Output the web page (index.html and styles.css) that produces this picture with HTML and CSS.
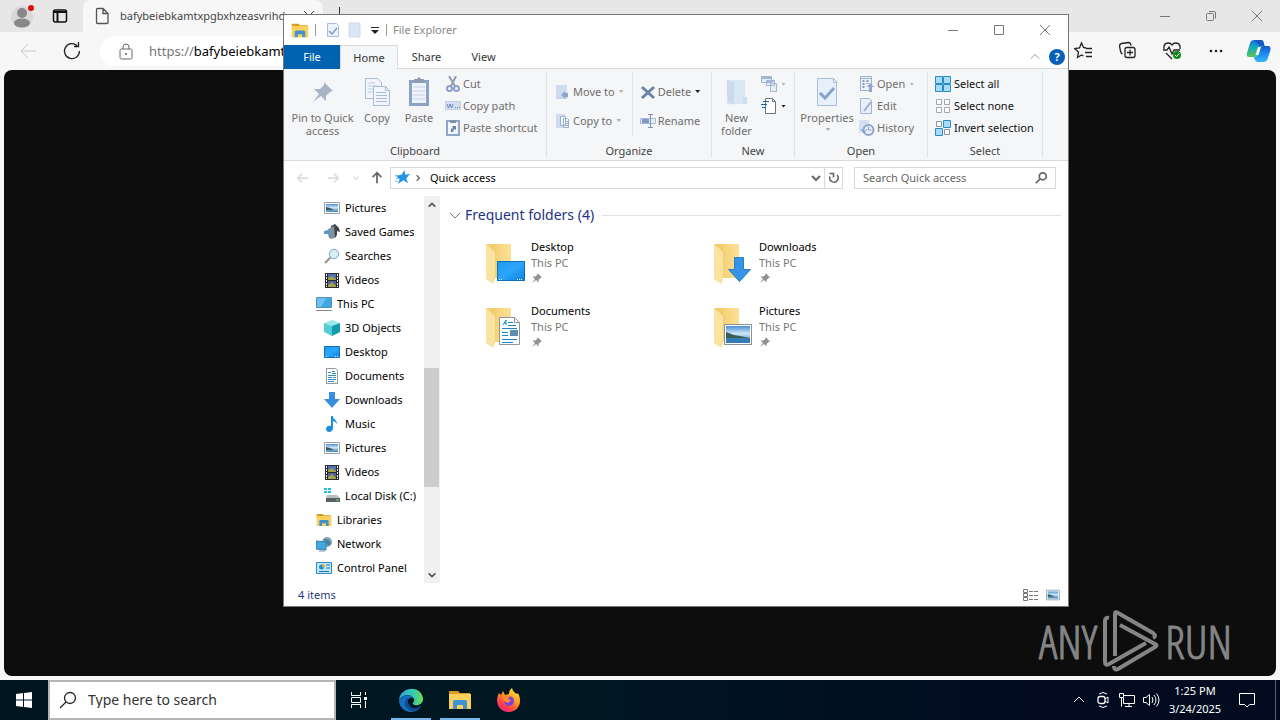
FILE: index.html
```html
<!DOCTYPE html>
<html lang="en">
<head>
<meta charset="utf-8">
<title>File Explorer</title>
<link rel="stylesheet" href="styles.css">
</head>
<body>
<svg class="sprite" aria-hidden="true">
  <defs>
    <linearGradient id="gFold" x1="0" x2="1"><stop offset="0" stop-color="#f3cd6c"/><stop offset="1" stop-color="#fbe196"/></linearGradient>
    <linearGradient id="gDesk" x1="0" y1="0" x2="1" y2="1"><stop offset="0" stop-color="#1e9bf0"/><stop offset=".5" stop-color="#2ba6fb"/><stop offset="1" stop-color="#0a84e0"/></linearGradient>
    <linearGradient id="gSky" x1="0" y1="0" x2="0" y2="1"><stop offset="0" stop-color="#4a90d9"/><stop offset=".45" stop-color="#cfe6f3"/><stop offset="1" stop-color="#3f7fae"/></linearGradient>
    <linearGradient id="gEdge" x1="0" y1="0" x2="1" y2="0"><stop offset="0" stop-color="#2aa9e0"/><stop offset=".6" stop-color="#35c9b0"/><stop offset="1" stop-color="#6fdb4b"/></linearGradient>
    <linearGradient id="gFox" x1=".8" y1="0" x2=".2" y2="1"><stop offset="0" stop-color="#ffe94a"/><stop offset=".4" stop-color="#ff9a1f"/><stop offset=".75" stop-color="#ff3f4a"/><stop offset="1" stop-color="#e0208c"/></linearGradient>
    <linearGradient id="gCopA" x1="0" y1="0" x2="0" y2="1"><stop offset="0" stop-color="#1b6fd0"/><stop offset=".4" stop-color="#13a7c4"/><stop offset="1" stop-color="#5cc653"/></linearGradient>
    <linearGradient id="gCopB" x1="0" y1="0" x2="0" y2="1"><stop offset="0" stop-color="#1a55c8"/><stop offset=".5" stop-color="#1d8df0"/><stop offset="1" stop-color="#35b8f2"/></linearGradient>
  </defs>
  <symbol id="folder-app" viewBox="0 0 24 22"><path d="M1 2h9l2 2h10v4H1z" fill="#dd9a22"/><path d="M1 5h22v15H1z" fill="#fad15c"/><path d="M5 20v-7q0-2 2-2h10q2 0 2 2v7h-4v-4H9v4z" fill="#3f93d2"/></symbol>
  <symbol id="pictures" viewBox="0 0 16 16"><path d="M.5 2.5h15v11H.5z" fill="#fff" stroke="#8ea2b2"/><path d="M2 4h12v8H2z" fill="url(#gSky)"/><path d="M2 7l4 1 4 2H2z" fill="#315a68"/></symbol>
  <symbol id="games" viewBox="0 0 16 16"><path d="M7 2l4-2 4 4 1 4-3-1v4l-2 3H7z" fill="#3f474e"/><path d="M0 7l4-1 1-2 3 3 1 7H5L4 10H0z" fill="#5b98c5"/><path d="M6 4l4-2 1 12-5 1z" fill="#87919a"/></symbol>
  <symbol id="searches" viewBox="0 0 16 16"><path d="M7 9l-6 6" stroke="#9b9189" stroke-width="2"/><circle cx="10" cy="6" r="4.7" fill="#d7effb" stroke="#7da6c2"/></symbol>
  <symbol id="videos" viewBox="0 0 16 16"><path d="M1 1h14v15H1z" fill="#252a30"/><path d="M4 2h8v6H4z" fill="#4f72b8"/><path d="M4 9h8v6H4z" fill="#5361a0"/><path d="M4 6l4-2 4 3v1H4zM4 13l4-3 4 4v1H4z" fill="#a4a243"/><path d="M2.500 2v13M13.500 2v13" stroke="#fff" stroke-dasharray="2 1"/></symbol>
  <symbol id="pc" viewBox="0 0 16 16"><path d="M.5 1.500h15v10H.5z" fill="#3fa9e8" stroke="#5790b5"/><path d="M1 2h9L5 11H1z" fill="#6cc2f2"/><path d="M0 14.500h16" stroke="#7e8890"/></symbol>
  <symbol id="cube" viewBox="0 0 16 16"><path d="M0 3l8-3 8 3-8 3z" fill="#9ae9ec"/><path d="M0 3l8 3v10l-8-4z" fill="#55cbd4"/><path d="M16 3L8 6v10l8-4z" fill="#129aad"/></symbol>
  <symbol id="desk" viewBox="0 0 16 16"><path d="M.5 2.500h15v11H.5z" fill="url(#gDesk)" stroke="#0f6cb7"/><path d="M2 12.500h2M11 12.500h3" stroke="#fff" stroke-dasharray="1"/></symbol>
  <symbol id="doc" viewBox="0 0 16 16"><path d="M2.500.5h9l2 2v13h-11z" fill="#fff" stroke="#8d979d"/><path d="M4 4.500h3M8 3.500h3M8 5.500h4M4 7.500h8M4 9.500h4M9 9.500h3M4 11.500h8M4 13.500h6" stroke="#368dc5"/></symbol>
  <symbol id="down" viewBox="0 0 16 16"><path d="M5 0h6v7h5l-8 9-8-9h5z" fill="#3a8ddb"/></symbol>
  <symbol id="music" viewBox="0 0 16 16"><path d="M7 0h2c0 4 5 4 4 9 0-3-2-3-4-4v7c0 5-7 5-7 1 0-3 3-4 5-3z" fill="#1e8fe0"/></symbol>
  <symbol id="disk" viewBox="0 0 16 16"><path d="M0 0h3v2H0zM4 0h3v2H4zM0 3h3v2H0zM4 3h3v2H4z" fill="#20bde5"/><path d="M3 7h10l3 3H2z" fill="#b8bec2"/><path d="M2 10h14v4H2z" fill="#555f65"/><path d="M12 12h3" stroke="#83e35e"/></symbol>
  <symbol id="network" viewBox="0 0 16 16"><circle cx="11" cy="6" r="5" fill="#7fa4b8"/><path d="M8 3l5 1 2 4-3 2z" fill="#4a7f9d"/><path d="M0 5l10 1v8L0 13z" fill="#45a7e0" stroke="#337fb1"/><path d="M3 15h6" stroke="#8093a0"/></symbol>
  <symbol id="control" viewBox="0 0 16 16"><path d="M.5 2.500h15v11H.5z" fill="#bfe8fb" stroke="#3389bf"/><circle cx="5.500" cy="7" r="2.500" fill="#248fd0"/><path d="M6 7V4a3 3 0 013 3z" fill="#f3a335"/><path d="M10 5h4M10 8h4M3 11.500h10" stroke="#2374a6"/></symbol>
  <symbol id="star" viewBox="0 0 16 16"><path d="M10 0l1 5 5-1-4 5 2 5-5-3-6 4 2-5-4-4 6-1z" fill="#2196e8"/><path d="M0 6h4M1 9h3M0 12h3" stroke="#6bb9ef"/></symbol>
  <symbol id="pin" viewBox="0 0 24 24"><path d="M13 2l9 9-3 1-4 4v5l-5-5-8 6 6-8-5-5h6l4-4z" fill="currentColor"/></symbol>
  <symbol id="copy" viewBox="0 0 32 32"><path d="M4.500 2.500h12l4 4v16h-16z" fill="#f2f6fc" stroke="#a9bbd6"/><path d="M7 7h7M7 10h10M7 13h10M7 16h10" stroke="#bccbe2"/><path d="M12.500 10.500h12l4 4v15h-16z" fill="#f2f6fc" stroke="#a9bbd6"/><path d="M24.500 10.500v4h4M15 16.500h10M15 19.500h11M15 22.500h11M15 25.500h11" stroke="#a9bbd6" fill="none"/></symbol>
  <symbol id="paste" viewBox="0 0 32 32"><path d="M6 4h20v26H6z" fill="#8da3c6"/><path d="M9 7h14v20H9z" fill="#eef3fb"/><path d="M11 3h3l2-2 2 2h3v4H11z" fill="#8f9caf"/><path d="M10 11h12M10 15h12M10 19h12M10 23h12" stroke="#c5d2e8"/></symbol>
  <symbol id="cut" viewBox="0 0 16 16"><path d="M4 0l6 10M11 0L6 10" stroke="#93a0b2" stroke-width="2"/><circle cx="4.500" cy="12.500" r="2.500" fill="none" stroke="#8ba1c5" stroke-width="2"/><circle cx="11.500" cy="12.500" r="2.500" fill="none" stroke="#8ba1c5" stroke-width="2"/></symbol>
  <symbol id="path" viewBox="0 0 16 16"><path d="M.5 3.500h15v8H.5z" fill="#d4def0" stroke="#c3d0e6"/><path d="M2 6l1.500 4L5 6l1.500 4L8 6M10 9.500h1m1 0h1m1 0h1" fill="none" stroke="#6f86b3"/></symbol>
  <symbol id="shortcut" viewBox="0 0 16 16"><path d="M2 1h12v14H2z" fill="#f4f7fc" stroke="#8fa5c9" stroke-width="2"/><path d="M5 0h6v3H5z" fill="#8090a8"/><path d="M6 12V9l2-1-1-2h4v4L9 9l-1 3z" fill="#6484b5"/></symbol>
  <symbol id="moveto" viewBox="0 0 16 16"><path d="M1 1h11v14H1z" fill="#d1dcee"/><path d="M12 9v5H2" fill="none" stroke="#bdcce3"/><path d="M6 11l4-4v2h3v4h-3v2z" fill="#8fa7cd"/></symbol>
  <symbol id="copyto" viewBox="0 0 16 16"><path d="M1 1h9v14H1z" fill="#d1dcee"/><path d="M5.500 3.500h5v9h-5zM8.500 5.500h4l1 1v8h-5z" fill="#f3f6fb" stroke="#9bafd0"/><path d="M10 8.500h3m-3 2h3m-3 2h3" stroke="#9bafd0"/></symbol>
  <symbol id="delete" viewBox="0 0 16 16"><path d="M2 3l12 11M14 3L2 14" stroke="#6c83a8" stroke-width="3"/></symbol>
  <symbol id="rename" viewBox="0 0 16 16"><path d="M.5 5.500h15v5H.5z" fill="#e6ecf6" stroke="#a7b9d7"/><path d="M2 6h7v4H2z" fill="#7f99c4"/><path d="M8 1.500h5M8 14.500h5M10.500 2v12" stroke="#7f93b3"/></symbol>
  <symbol id="newfolder" viewBox="0 0 32 32"><path d="M6 4h18v24H6z" fill="#d9e7f4"/><path d="M6 4l7 3v22l-7-3z" fill="#c9dbec"/><path d="M22 21h4v7h-4z" fill="#cddeee"/></symbol>
  <symbol id="newitem" viewBox="0 0 16 16"><path d="M.5.500h10v6H.5zM5.500 4.500h8v5h-8zM9.500 7.500h6v8h-6z" fill="#e8eef8" stroke="#a3b5d3"/><path d="M1 2h9M6 5h7" stroke="#a3b5d3" stroke-width="2"/></symbol>
  <symbol id="easy" viewBox="0 0 16 16"><path d="M4.500.500h7l3 3v12h-10z" fill="#fff" stroke="#6d7378"/><path d="M11.500.500v3h3" fill="none" stroke="#6d7378"/><path d="M2 3.500h6M0 6.500h6M1 9.500h4" stroke="#1667aa"/></symbol>
  <symbol id="props" viewBox="0 0 32 32"><path d="M6.500 2.500h16l3 3v24h-19z" fill="#e7effb" stroke="#a9bddd"/><path d="M22.500 2.500v4h4" fill="none" stroke="#a9bddd"/><path d="M9 17l5 5 9-10" fill="none" stroke="#8ba2c8" stroke-width="3"/></symbol>
  <symbol id="open" viewBox="0 0 16 16"><path d="M1.500.500h11v14h-11z" fill="#eef3fb" stroke="#9eb0d0"/><path d="M4.500 4v9M8.500 4v4" stroke="#8299c3" stroke-width="2" stroke-dasharray="2 1"/><path d="M2 2.500h10" stroke="#9eb0d0"/><path d="M10 16v-5H8l3-4 4 4h-2v5z" fill="#90a7cd"/></symbol>
  <symbol id="edit" viewBox="0 0 16 16"><path d="M1.500.500h9l2 2v13h-11z" fill="#e8eff9" stroke="#a2b5d4"/><path d="M5 13l7-9" stroke="#9bb0d2" stroke-width="2"/></symbol>
  <symbol id="history" viewBox="0 0 16 16"><path d="M0 0h10v13H0z" fill="#d5e1f0"/><circle cx="9.500" cy="10" r="5" fill="#e9f0fa" stroke="#8ca4cb" stroke-width="2"/><path d="M9.500 7v3h3M2 9l3 4 3-4" fill="none" stroke="#7f98c2"/></symbol>
  <symbol id="selall" viewBox="0 0 16 16"><path d="M.5.5h7v7h-7zM8.500.5h7v7h-7zM.5 8.500h7v7h-7zM8.500 8.500h7v7h-7z" fill="#a5dcfb" stroke="#2b8ac2"/></symbol>
  <symbol id="selnone" viewBox="0 0 16 16"><path d="M1.500 1.500h5v5h-5zM9.500 1.500h5v5h-5zM1.500 9.500h5v5h-5zM9.500 9.500h5v5h-5z" fill="#fff" stroke="#a4a8ab"/></symbol>
  <symbol id="selinv" viewBox="0 0 16 16"><path d="M1.500 1.500h5v5h-5zM9.500 9.500h5v5h-5z" fill="#fff" stroke="#8c969d"/><path d="M8.500.5h7v7h-7zM.5 8.500h7v7h-7z" fill="#a5dcfb" stroke="#2b8ac2"/></symbol>
  <symbol id="min" viewBox="0 0 12 12"><path d="M1 6.500h10" stroke="currentColor"/></symbol>
  <symbol id="max" viewBox="0 0 12 12"><path d="M1.500 1.500h9v9h-9z" fill="none" stroke="currentColor"/></symbol>
  <symbol id="close" viewBox="0 0 12 12"><path d="M1 1l10 10M11 1L1 11" stroke="currentColor"/></symbol>
  <symbol id="chev" viewBox="0 0 12 12"><path d="M2 4l4 4 4-4" fill="none" stroke="currentColor" stroke-width="2"/></symbol>
  <symbol id="chevthin" viewBox="0 0 12 12"><path d="M1 4l5 5 5-5" fill="none" stroke="currentColor"/></symbol>
  <symbol id="lens" viewBox="0 0 16 16"><circle cx="10" cy="6" r="4" fill="none" stroke="currentColor" stroke-width="2"/><path d="M7 9l-5 5" stroke="currentColor" stroke-width="2"/></symbol>
  <symbol id="arrow" viewBox="0 0 16 16"><path d="M14 8H3M7 3L2 8l5 5" fill="none" stroke="currentColor" stroke-width="2"/></symbol>
  <symbol id="fold48" viewBox="0 0 48 48"><path d="M12 4h21v34H17z" fill="url(#gFold)"/><path d="M8 4h2l7 6v30l-2 4-7-5z" fill="#fae2a0"/><path d="M8 4h10l-1 34V12z" fill="#f1cc70"/></symbol>
</svg>

<div class="screen">
  <main class="browser">
    <header class="tabstrip">
      <button class="cell44" aria-label="Profile"><svg width="24" height="28" viewBox="0 0 24 28"><circle cx="12" cy="15" r="11" fill="#dad8d8"/><circle cx="12" cy="11" r="5" fill="#888"/><ellipse cx="12" cy="21" rx="8" ry="4.500" fill="#888"/><circle cx="21" cy="6" r="3" fill="#d8101c"/></svg></button>
      <button class="cell32" aria-label="Tab actions"><svg width="16" height="16" viewBox="0 0 16 16"><rect x="1.500" y="2" width="13" height="12" rx="2" fill="none" stroke="#111" stroke-width="1.500"/><path d="M2 4h12M5.500 4v10" stroke="#111" stroke-width="2"/></svg></button>
      <div class="tab"><svg width="14" height="18" viewBox="0 0 14 18"><path d="M1.500 2.500q0-1 1-1h5.500l5 5v9q0 1-1 1h-9.500q-1 0-1-1zM8 1.500v5h5" fill="none" stroke="#555" stroke-width="1.300"/></svg><span class="tabtitle">bafybeiebkamtxpgbxhzeasvrihd</span><button class="tabclose" aria-label="Close tab"><svg width="12" height="12"><use href="#close"/></svg></button></div>
      <button class="cell32 newtab" aria-label="New tab"><svg width="14" height="14" viewBox="0 0 14 14"><path d="M7.500 0v14M0 7.500h14" stroke="#333"/></svg></button>
      <div class="wincontrols">
        <button aria-label="Minimize browser"><svg width="12" height="12"><use href="#min"/></svg></button>
        <button aria-label="Restore browser"><svg width="12" height="12" viewBox="0 0 12 12"><rect x="1.500" y="3.500" width="7" height="7" rx="1" fill="none" stroke="currentColor"/><path d="M4 1.500h5q1.500 0 1.500 1.500v5.500" fill="none" stroke="currentColor"/></svg></button>
        <button aria-label="Close browser"><svg width="12" height="12"><use href="#close"/></svg></button>
      </div>
    </header>
    <div class="toolbar">
      <button class="cell44 dim" aria-label="Browser back"><svg width="18" height="16" viewBox="0 0 18 16"><path d="M17 8H2M9 1L2 8l7 7" fill="none" stroke="currentColor"/></svg></button>
      <button class="cell44" aria-label="Refresh"><svg width="18" height="18" viewBox="0 0 18 18"><path d="M16.500 9A7.500 7.500 0 1 1 14 3.500M15.500 0v4.500H11" fill="none" stroke="#222" stroke-width="1.300"/></svg></button>
      <div class="urlbar"><svg width="14" height="17" viewBox="0 0 14 17"><rect x="1" y="6" width="12" height="10" rx="1.500" fill="none" stroke="#666"/><path d="M4 6V4a3 3 0 016 0v2" fill="none" stroke="#666"/><circle cx="7" cy="11" r="1" fill="#555"/></svg><span class="url"><span class="scheme">https://</span>bafybeiebkamt</span></div>
      <div class="actions">
        <button class="cell44" aria-label="Favorites"><svg width="20" height="20" viewBox="0 0 20 20"><path d="M12 7L9.500 6.500 7.500 2 5.500 7l-5 .5 4 3.500-1 5.500 4-2.500 2 1M12 7.500h6M11 11.500h7M12 15.500h6" fill="none" stroke="#222" stroke-width="1.300"/></svg></button>
        <button class="cell44" aria-label="Collections"><svg width="20" height="20" viewBox="0 0 20 20"><rect x="7" y="6.500" width="10" height="10" rx="2" fill="none" stroke="#222" stroke-width="1.300"/><path d="M12 8.500v6M9 11.500h6M4.500 13Q3 12.500 2.500 10L1.500 5q0-2 2-2.500l7-1q2 0 2.500 3" fill="none" stroke="#222" stroke-width="1.300"/></svg></button>
        <button class="cell44" aria-label="Browser essentials"><svg width="20" height="20" viewBox="0 0 20 20"><path d="M2 8C1 1 8 1 10 4c2-3 9-3 8 4M1 9h4l2-3 3 7 2-4h6M4 12l6 6" fill="none" stroke="#222" stroke-width="1.300"/><circle cx="15" cy="14" r="4" fill="#128a1b"/><path d="M13 14l1.500 1.500 3-3" fill="none" stroke="#fff"/></svg></button>
        <button class="cell44" aria-label="Settings and more"><svg width="20" height="20" viewBox="0 0 20 20"><g fill="#222"><circle cx="5" cy="10" r="1.300"/><circle cx="10" cy="10" r="1.300"/><circle cx="15" cy="10" r="1.300"/></g></svg></button>
        <button class="copilot" aria-label="Copilot"><svg width="26" height="24" viewBox="0 0 26 24"><path d="M8 1h7q2 0 2.500 2l1 4-4 1-3 8q-1 2-3 2H3q-3 0-2-4L4 4q1-3 4-3z" fill="url(#gCopA)"/><path d="M8 1h7q2 0 2.500 2l1 4h-5z" fill="#1758c2"/><path d="M18 7h4q3 0 2.500 4l-3 9q-1 3-4 3h-6q-2 0-3-3l-.5-2q3 0 4-3l2-6q1-2 4-2z" fill="url(#gCopB)"/><path d="M12 8h3l-2.500 8H9.500z" fill="#f4fbfb"/></svg></button>
      </div>
    </div>
    <div class="webpage">
      <div class="watermark"><span>ANY</span><svg width="56" height="62" viewBox="0 0 56 62"><g fill="none" stroke="currentColor" stroke-width="4" stroke-linejoin="round"><path d="M6 8q-4-1-4 3v41q0 4 4 2L43 33"/><path d="M12 46V4q0-3 3-1l35 20q4 3 0 5"/><path d="M17 15l35 19q3 1 0 3L15 59q-4 2-4-3"/></g></svg><span>RUN</span></div>
    </div>
  </main>

  <section class="explorer" aria-label="File Explorer window">
    <header class="titlebar">
      <svg width="18" height="17" class="appicon"><use href="#folder-app"/></svg><i class="bar"></i>
      <button aria-label="Quick properties"><svg width="14" height="16" viewBox="0 0 14 16"><path d="M1.500 1.500h9l2 2v11h-11z" fill="#eaf2fc" stroke="#a8bddb"/><path d="M3 9l3 3 5-6" fill="none" stroke="#7d9cc9" stroke-width="1.500"/></svg></button>
      <button aria-label="Quick new folder"><svg width="14" height="16" viewBox="0 0 14 16"><path d="M1 1h11v14H1z" fill="#dbe6f4" stroke="#ccdaeb"/></svg></button>
      <button aria-label="Customize toolbar"><svg width="8" height="8" viewBox="0 0 8 8"><path d="M0 1.500h8" stroke="#222"/><path d="M0 4h8L4 8z" fill="#222"/></svg></button>
      <i class="bar"></i><h1>File Explorer</h1>
      <div class="wincontrols">
        <button aria-label="Minimize"><svg width="12" height="12"><use href="#min"/></svg></button>
        <button aria-label="Maximize"><svg width="12" height="12"><use href="#max"/></svg></button>
        <button aria-label="Close"><svg width="12" height="12"><use href="#close"/></svg></button>
      </div>
    </header>
    <nav class="tabs">
      <button class="file">File</button><button class="active">Home</button><button>Share</button><button>View</button>
      <div class="help"><button aria-label="Collapse ribbon"><svg width="10" height="10" class="flip"><use href="#chevthin"/></svg></button><button class="q" aria-label="Help">?</button></div>
    </nav>
    <div class="ribbon">
      <div class="group clipboard"><div class="tools">
        <button class="big pinbtn"><svg width="32" height="32" viewBox="-4 -4 32 32"><use href="#pin" width="24" height="24"/></svg>Pin to Quick<br>access</button>
        <button class="big copybtn"><svg width="32" height="32"><use href="#copy"/></svg>Copy</button>
        <button class="big pastebtn"><svg width="32" height="32"><use href="#paste"/></svg>Paste</button>
        <div class="stack"><button><svg width="16" height="16"><use href="#cut"/></svg>Cut</button><button><svg width="16" height="16"><use href="#path"/></svg>Copy path</button><button><svg width="16" height="16"><use href="#shortcut"/></svg>Paste shortcut</button></div>
      </div><h2>Clipboard</h2></div>
      <div class="group organize"><div class="tools">
        <div class="stack loose"><button><svg width="16" height="16"><use href="#moveto"/></svg>Move to<i class="tri"></i></button><button><svg width="16" height="16"><use href="#copyto"/></svg>Copy to<i class="tri"></i></button></div>
        <div class="stack loose second"><button><svg width="16" height="16"><use href="#delete"/></svg>Delete<i class="tri dark"></i></button><button><svg width="16" height="16"><use href="#rename"/></svg>Rename</button></div>
      </div><h2>Organize</h2></div>
      <div class="group new"><div class="tools">
        <button class="big newbtn"><svg width="32" height="32"><use href="#newfolder"/></svg>New<br>folder</button>
        <div class="stack"><button aria-label="New item"><svg width="16" height="16"><use href="#newitem"/></svg><i class="tri"></i></button><button aria-label="Easy access"><svg width="16" height="16"><use href="#easy"/></svg><i class="tri dark"></i></button></div>
      </div><h2>New</h2></div>
      <div class="group opengroup"><div class="tools">
        <button class="big propbtn"><svg width="32" height="32"><use href="#props"/></svg>Properties<i class="tri"></i></button>
        <div class="stack"><button><svg width="16" height="16"><use href="#open"/></svg>Open<i class="tri"></i></button><button><svg width="16" height="16"><use href="#edit"/></svg>Edit</button><button><svg width="16" height="16"><use href="#history"/></svg>History</button></div>
      </div><h2>Open</h2></div>
      <div class="group select"><div class="tools">
        <div class="stack on"><button><svg width="16" height="16"><use href="#selall"/></svg>Select all</button><button><svg width="16" height="16"><use href="#selnone"/></svg>Select none</button><button><svg width="16" height="16"><use href="#selinv"/></svg>Invert selection</button></div>
      </div><h2>Select</h2></div>
    </div>
    <div class="navrow">
      <button class="nb faint" aria-label="Back"><svg width="14" height="14"><use href="#arrow"/></svg></button>
      <button class="nb faint" aria-label="Forward"><svg width="14" height="14" class="mirror"><use href="#arrow"/></svg></button>
      <button class="nb tiny faint" aria-label="Recent locations"><svg width="8" height="8"><use href="#chev"/></svg></button>
      <button class="nb up" aria-label="Up"><svg width="14" height="14" class="quarter"><use href="#arrow"/></svg></button>
      <div class="address"><svg width="15" height="15"><use href="#star"/></svg><svg width="8" height="8" class="left"><use href="#chev"/></svg><span>Quick access</span><button class="drop" aria-label="Previous locations"><svg width="12" height="12"><use href="#chev"/></svg></button><button class="refresh" aria-label="Refresh folder"><svg width="12" height="12" viewBox="0 0 12 12"><path d="M9 3A4.200 4.200 0 1 1 2 4.500M1.500 1.500h4v4" fill="none" stroke="#666" stroke-width="1.600"/></svg></button></div>
      <label class="search"><input type="text" placeholder="Search Quick access" aria-label="Search Quick access"><svg width="14" height="14"><use href="#lens"/></svg></label>
    </div>
    <div class="body">
      <nav class="tree"><ul>
        <li><a href="#"><svg width="16" height="16"><use href="#pictures"/></svg>Pictures</a></li>
        <li><a href="#"><svg width="16" height="16"><use href="#games"/></svg>Saved Games</a></li>
        <li><a href="#"><svg width="16" height="16"><use href="#searches"/></svg>Searches</a></li>
        <li><a href="#"><svg width="16" height="16"><use href="#videos"/></svg>Videos</a></li>
        <li class="root"><a href="#"><svg width="16" height="16"><use href="#pc"/></svg>This PC</a></li>
        <li><a href="#"><svg width="16" height="16"><use href="#cube"/></svg>3D Objects</a></li>
        <li><a href="#"><svg width="16" height="16"><use href="#desk"/></svg>Desktop</a></li>
        <li><a href="#"><svg width="16" height="16"><use href="#doc"/></svg>Documents</a></li>
        <li><a href="#"><svg width="16" height="16"><use href="#down"/></svg>Downloads</a></li>
        <li><a href="#"><svg width="16" height="16"><use href="#music"/></svg>Music</a></li>
        <li><a href="#"><svg width="16" height="16"><use href="#pictures"/></svg>Pictures</a></li>
        <li><a href="#"><svg width="16" height="16"><use href="#videos"/></svg>Videos</a></li>
        <li><a href="#"><svg width="16" height="16"><use href="#disk"/></svg>Local Disk (C:)</a></li>
        <li class="root"><a href="#"><svg width="16" height="16"><use href="#folder-app"/></svg>Libraries</a></li>
        <li class="root"><a href="#"><svg width="16" height="16"><use href="#network"/></svg>Network</a></li>
        <li class="root"><a href="#"><svg width="16" height="16"><use href="#control"/></svg>Control Panel</a></li>
      </ul></nav>
      <div class="scroll"><button aria-label="Scroll up"><svg width="10" height="10" class="flip"><use href="#chev"/></svg></button><div class="track"><i class="before"></i><i class="thumb"></i><i class="after"></i></div><button aria-label="Scroll down"><svg width="10" height="10"><use href="#chev"/></svg></button></div>
      <section class="files">
        <h2><svg width="12" height="12"><use href="#chevthin"/></svg>Frequent folders (4)</h2>
        <div class="tiles">
          <a href="#" class="tile"><svg width="48" height="48"><use href="#fold48"/><rect x="19.500" y="21.500" width="27" height="19" fill="url(#gDesk)" stroke="#0f6fba"/><path d="M21 39.500h3M39 39.500h6" stroke="#fff" stroke-dasharray="1"/></svg><span>Desktop<small>This PC</small><svg width="12" height="12"><use href="#pin"/></svg></span></a>
          <a href="#" class="tile"><svg width="48" height="48"><use href="#fold48"/><path d="M28.500 17.500h9v12h7l-11 12-11-12h6z" fill="#3693e5" stroke="#2c7dc5"/></svg><span>Downloads<small>This PC</small><svg width="12" height="12"><use href="#pin"/></svg></span></a>
          <a href="#" class="tile"><svg width="48" height="48"><use href="#fold48"/><path d="M21.500 13.500h15l5 5v22h-20z" fill="#fff" stroke="#8c969b"/><path d="M36.500 13.500v5h5" fill="none" stroke="#8c969b"/><path d="M25 21l3-5v5m-2-2h2M30 18.500h5M30 21.500h8M24 24.500h15M24 28.500h6M24 31.500h6M24 35.500h15M24 38.500h11" stroke="#1687ca" fill="none"/><path d="M32 26h8v6h-8z" fill="#598fb1"/></svg><span>Documents<small>This PC</small><svg width="12" height="12"><use href="#pin"/></svg></span></a>
          <a href="#" class="tile"><svg width="48" height="48"><use href="#fold48"/><rect x="18.500" y="20.500" width="27" height="20" fill="#fff" stroke="#8b9399"/><path d="M20 22h24v17H20z" fill="url(#gSky)"/><path d="M20 28l8 3 6 1 10 2H20z" fill="#375f54"/><path d="M20 34h24v5H20z" fill="#367bb4"/></svg><span>Pictures<small>This PC</small><svg width="12" height="12"><use href="#pin"/></svg></span></a>
        </div>
      </section>
    </div>
    <footer class="status"><span>4 items</span><div><button aria-label="Details view"><svg width="16" height="14" viewBox="0 0 16 14"><path d="M.5 1.500h4v3h-4zM.5 5.500h4v3h-4zM.5 9.500h4v3h-4z" fill="#fff" stroke="#777"/><path d="M6 3.500h4m1 0h4M6 7.500h4m1 0h4m-9 4h4m1 0h4" stroke="#777"/></svg></button><button aria-label="Large icons view"><svg width="14" height="14"><use href="#pictures"/></svg></button></div></footer>
  </section>

  <footer class="taskbar">
    <button class="start" aria-label="Start"><svg width="16" height="16" viewBox="0 0 16 16"><path d="M0 2l7-1v6.500H0zM8 1l8-1v7.500H8zM0 8.500h7V15l-7-1zM8 8.500h8V16l-8-1z" fill="#fff"/></svg></button>
    <label class="tasksearch"><svg width="18" height="18" viewBox="0 0 18 18"><circle cx="11" cy="7" r="5.500" fill="none" stroke="#222" stroke-width="1.300"/><path d="M7 11l-6 6" stroke="#222" stroke-width="1.300"/></svg><input type="text" placeholder="Type here to search" aria-label="Type here to search"></label>
    <div class="apps">
      <button class="taskview" aria-label="Task View"><svg width="18" height="18" viewBox="0 0 18 18"><path d="M1.500 1v3.500h9V1M1.500 17v-3.500h9V17M1.500 6.500h9v5h-9zM15.500 1v3M15.500 10v7" fill="none" stroke="#fff"/><path d="M14 6h3v3h-3z" fill="#fff"/></svg></button>
      <button class="running" aria-label="Microsoft Edge"><svg width="24" height="24" viewBox="0 0 24 24"><path d="M0 12C1-1 21-4 24 10c1 7-8 9-10 6-1-2 2-2 1-5C12 5 4 6 0 12z" fill="url(#gEdge)"/><path d="M0 12c4-6 12-6 14-2-4-1-6 2-5 5 2 6 8 7 13 3-3 7-14 8-19 2q-3-3-3-8z" fill="#1670c2"/><path d="M8 10c-5 6 0 13 7 13 3 0 6-3 7-5-5 4-11 3-13-3q-1-3 2-5z" fill="#0d4a91"/></svg></button>
      <button class="running" aria-label="File Explorer"><svg width="24" height="22"><use href="#folder-app"/></svg></button>
      <button aria-label="Firefox"><svg width="24" height="24" viewBox="0 0 24 24"><path d="M2 5l2 2 2-4 2 4 4-1q0-4 3-6 1 4 5 6l1-1c5 10 0 18-8 19C2 25-3 14 2 5z" fill="url(#gFox)"/><circle cx="12" cy="13" r="5" fill="#7c3fe0"/><path d="M6 8q5-2 8 1-3 0-3 2l3 1q-3 5-7 1z" fill="#ff8a26"/></svg></button>
    </div>
    <div class="tray">
      <button aria-label="Hidden icons"><svg width="12" height="12" class="flip"><use href="#chevthin"/></svg></button>
      <button aria-label="Meet now"><svg width="14" height="18" viewBox="0 0 14 18"><rect x="2" y="5.500" width="7" height="7" rx="2" fill="none" stroke="#fff" stroke-width="1.300"/><path d="M9 8l3-2v6l-3-2M3 3q4-3 8 0M3 15q4 3 8 0" fill="none" stroke="#fff"/></svg></button>
      <button aria-label="Network"><svg width="16" height="16" viewBox="0 0 16 16"><path d="M5 3.500h10.500v8H4.500V6M10 12v2.500M6 14.500h7M.5 1.500h4v4h-4zM2.500 6v8.500" fill="none" stroke="#fff"/></svg></button>
      <button aria-label="Volume"><svg width="18" height="16" viewBox="0 0 18 16"><path d="M1.500 5.500H4l3.500-3v11l-3.500-3H1.500zM10 5q2 3 0 6M12 3q4 5 0 10M14.500 1.500q5 6.500 0 13" fill="none" stroke="#fff"/></svg></button>
      <div class="clock"><span>1:25 PM</span><span>3/24/2025</span></div>
      <button class="notify" aria-label="Notifications"><svg width="16" height="16" viewBox="0 0 16 16"><path d="M.5 1.500h15v11h-5L8 15l-2.500-2.500h-5z" fill="none" stroke="#fff"/></svg></button>
      <i class="peek"></i>
    </div>
  </footer>
</div>
</body>
</html>
```

FILE: styles.css
```css
* { box-sizing: border-box; }
body { margin: 0; font: 11px/16px "Noto Sans", "Open Sans", sans-serif; color: #000; }
button { border: 0; padding: 0; margin: 0; background: none; font: inherit; color: inherit; display: flex; align-items: center; justify-content: center; }
input { border: 0; padding: 0; margin: 0; background: none; font: inherit; color: inherit; outline: 0; min-width: 0; flex: 1; }
a { color: inherit; text-decoration: none; }
h1, h2 { margin: 0; font: inherit; }
svg { flex: none; display: block; }
.sprite { position: absolute; width: 0; height: 0; }
.screen { position: relative; height: 100vh; display: flex; flex-direction: column; overflow: hidden; }
.flip { transform: rotate(180deg); }
.mirror { transform: scaleX(-1); }
.quarter { transform: rotate(90deg); }
.left { transform: rotate(-90deg); }

/* Browser */
.browser { flex: 1; display: flex; flex-direction: column; background: #f7f7f7; min-height: 0; }
.tabstrip { display: flex; height: 32px; background: #e7e7e7; }
.cell44 { width: 44px; }
.cell32 { width: 32px; }
.copilot { width: 42px; }
.tab { width: 240px; margin-left: 7px; padding: 0 8px 0 12px; display: flex; align-items: center; background: #f7f7f7; border-radius: 8px 8px 0 0; color: #444; }
.tabtitle { flex: 1; margin-left: 11px; overflow: hidden; white-space: nowrap; }
.newtab { height: 28px; }
.wincontrols { display: flex; margin-left: auto; color: #777; }
.wincontrols button { width: 46px; }
.toolbar { display: flex; height: 38px; padding-left: 6px; }
.dim { color: #c9c9c9; }
.urlbar { flex: 1; margin: 4px 0 4px 6px; padding-left: 19px; background: #fff; border-radius: 15px; display: flex; align-items: center; gap: 16px; font-size: 13px; }
.scheme { color: #777; }
.actions { display: flex; }
.webpage { flex: 1; margin: 0 4px 4px; background: #0d0d0d; border-radius: 8px; display: flex; align-items: flex-end; justify-content: flex-end; }
.watermark { display: flex; align-items: center; gap: 6px; padding: 0 44px 4px 0; color: #858585; font: 300 46px/62px "Open Sans Condensed Light", "Roboto Condensed Light", "Roboto Condensed", "Open Sans Condensed", sans-serif; -webkit-text-stroke: 1px currentColor; }

/* Explorer window */
.explorer { position: absolute; left: 283px; top: 14px; width: 786px; height: 593px; display: flex; flex-direction: column; background: #fff; border: 1px solid #777; }
.titlebar { display: flex; align-items: center; height: 30px; padding-left: 7px; color: #888; }
.bar { width: 1px; height: 12px; margin: 0 10px 0 6px; background: #999; }
.titlebar > button { width: 14px; margin-right: 8px; }
.titlebar > button + button + button { width: 10px; margin-right: 0; }
.titlebar h1 { margin-left: -4px; }
.titlebar .wincontrols button { height: 30px; }
.tabs { display: flex; height: 24px; border-bottom: 1px solid #dadbdc; }
.tabs > button { width: 57px; height: 24px; color: #333; }
.tabs .file { width: 56px; background: #0063b1; color: #fff; }
.tabs .active { width: 58px; background: #f5f6f7; border: 1px solid #dadbdc; border-bottom: 0; }
.help { margin-left: auto; padding-right: 3px; display: flex; align-items: center; gap: 9px; color: #888; }
.help .q { width: 16px; height: 16px; border-radius: 8px; background: #0a60b8; color: #fff; font-weight: bold; }
.ribbon { display: flex; height: 92px; background: #f5f6f7; border-bottom: 1px solid #dadbdc; color: #6e6e6e; }
.group { display: flex; flex-direction: column; border-right: 1px solid #e1e2e3; margin: 2px 0; }
.clipboard { width: 263px; }
.organize { width: 165px; }
.new { width: 83px; }
.opengroup { width: 133px; }
.select { width: 115px; }
.group h2 { text-align: center; color: #444; line-height: 14px; }
.tools { flex: 1; display: flex; align-items: flex-start; white-space: nowrap; }
.big { flex-direction: column; line-height: 13px; padding-top: 5px; }
.big svg { margin-bottom: 3px; }
.pinbtn { width: 77px; }
.pinbtn svg { color: #a9b5c7; }
.copybtn { width: 32px; }
.pastebtn { width: 52px; }
.newbtn { width: 49px; }
.propbtn { width: 64px; }
.stack { display: flex; flex-direction: column; padding-top: 2px; }
.stack button { height: 22px; gap: 2px; justify-content: flex-start; }
.loose { padding: 6px 0 0 8px; }
.loose button { height: 29px; }
.loose.second { margin-left: 8px; border-left: 1px solid #e1e2e3; padding-left: 7px; }
.select .stack { padding-left: 7px; }
.select .stack button { gap: 3px; }
.on { color: #111; }
.tri { width: 5px; height: 3px; margin-left: 2px; background: #b4b4b4; clip-path: polygon(0 0, 100% 0, 50% 100%); }
.dark { background: #222; }
.propbtn .tri { margin-top: 4px; }
.navrow { display: flex; height: 35px; align-items: center; padding: 0 12px 2px 4px; }
.nb { width: 30px; height: 22px; color: #666; }
.faint { color: #ddd; }
.tiny { width: 16px; }
.up { width: 26px; }
.address { flex: 1; height: 22px; border: 1px solid #d9d9d9; display: flex; align-items: center; padding-left: 4px; }
.address svg.left { margin: 0 8px 0 4px; color: #666; }
.drop { margin-left: auto; width: 16px; height: 20px; color: #666; }
.refresh { width: 18px; height: 20px; border-left: 1px solid #d9d9d9; }
.search { width: 202px; height: 22px; margin-left: 11px; border: 1px solid #d9d9d9; display: flex; align-items: center; padding: 0 7px 0 8px; color: #666; }
input::placeholder { color: inherit; opacity: 1; }
.body { flex: 1; min-height: 0; display: flex; }
.tree { width: 140px; overflow: hidden; }
.tree ul { list-style: none; margin: 0; padding: 0; }
.tree a { display: flex; align-items: center; gap: 5px; height: 24px; padding-left: 40px; white-space: nowrap; }
.tree .root a { padding-left: 32px; }
.scroll { width: 16px; background: #f0f0f0; display: flex; flex-direction: column; color: #555; }
.scroll button { height: 17px; }
.track { flex: 1; display: flex; flex-direction: column; }
.before { flex: 155; }
.thumb { flex: 119; background: #cdcdcd; width: 15px; }
.after { flex: 79; }
.files { flex: 1; padding: 8px 7px 0 9px; }
.files h2 { display: flex; align-items: center; gap: 4px; font-size: 14px; line-height: 22px; color: #1e3287; }
.files h2 svg { color: #777; }
.files h2::after { content: ""; flex: 1; height: 1px; margin-left: 4px; background: #e2e2e2; }
.tiles { display: grid; grid-template-columns: repeat(auto-fill, 228px); row-gap: 16px; padding: 13px 0 0 29px; }
.tile { display: flex; gap: 5px; height: 48px; }
.tile > svg { margin-top: 1px; }
.tile span { display: flex; flex-direction: column; }
.tile small { font-size: inherit; color: #777; }
.tile span svg { color: #8c9296; margin-top: 1px; }
.status { height: 23px; display: flex; align-items: center; justify-content: space-between; padding: 0 8px 0 14px; color: #1e3c78; }
.status div { display: flex; gap: 7px; }

/* Taskbar */
.taskbar { height: 40px; display: flex; background: linear-gradient(90deg, #00161e, #001722 45%, #020b20 80%); color: #fff; }
.start { width: 48px; }
.tasksearch { width: 288px; border: 2px solid #b4b4b4; background: #fff; color: #333; display: flex; align-items: center; padding-left: 9px; gap: 11px; font-size: 14px; }
.apps { display: flex; gap: 9px; }
.apps button { width: 40px; border: solid transparent; border-width: 2px 0; }
.apps .taskview { width: 46px; }
.apps .running { border-bottom-color: #75b5ed; }
.tray { display: flex; margin-left: auto; }
.tray button { width: 24px; }
.clock { width: 64px; display: flex; flex-direction: column; justify-content: center; text-align: center; line-height: 18px; }
.tray .notify { width: 40px; }
.peek { width: 5px; margin-left: 8px; border-left: 1px solid #56606d; }
```
